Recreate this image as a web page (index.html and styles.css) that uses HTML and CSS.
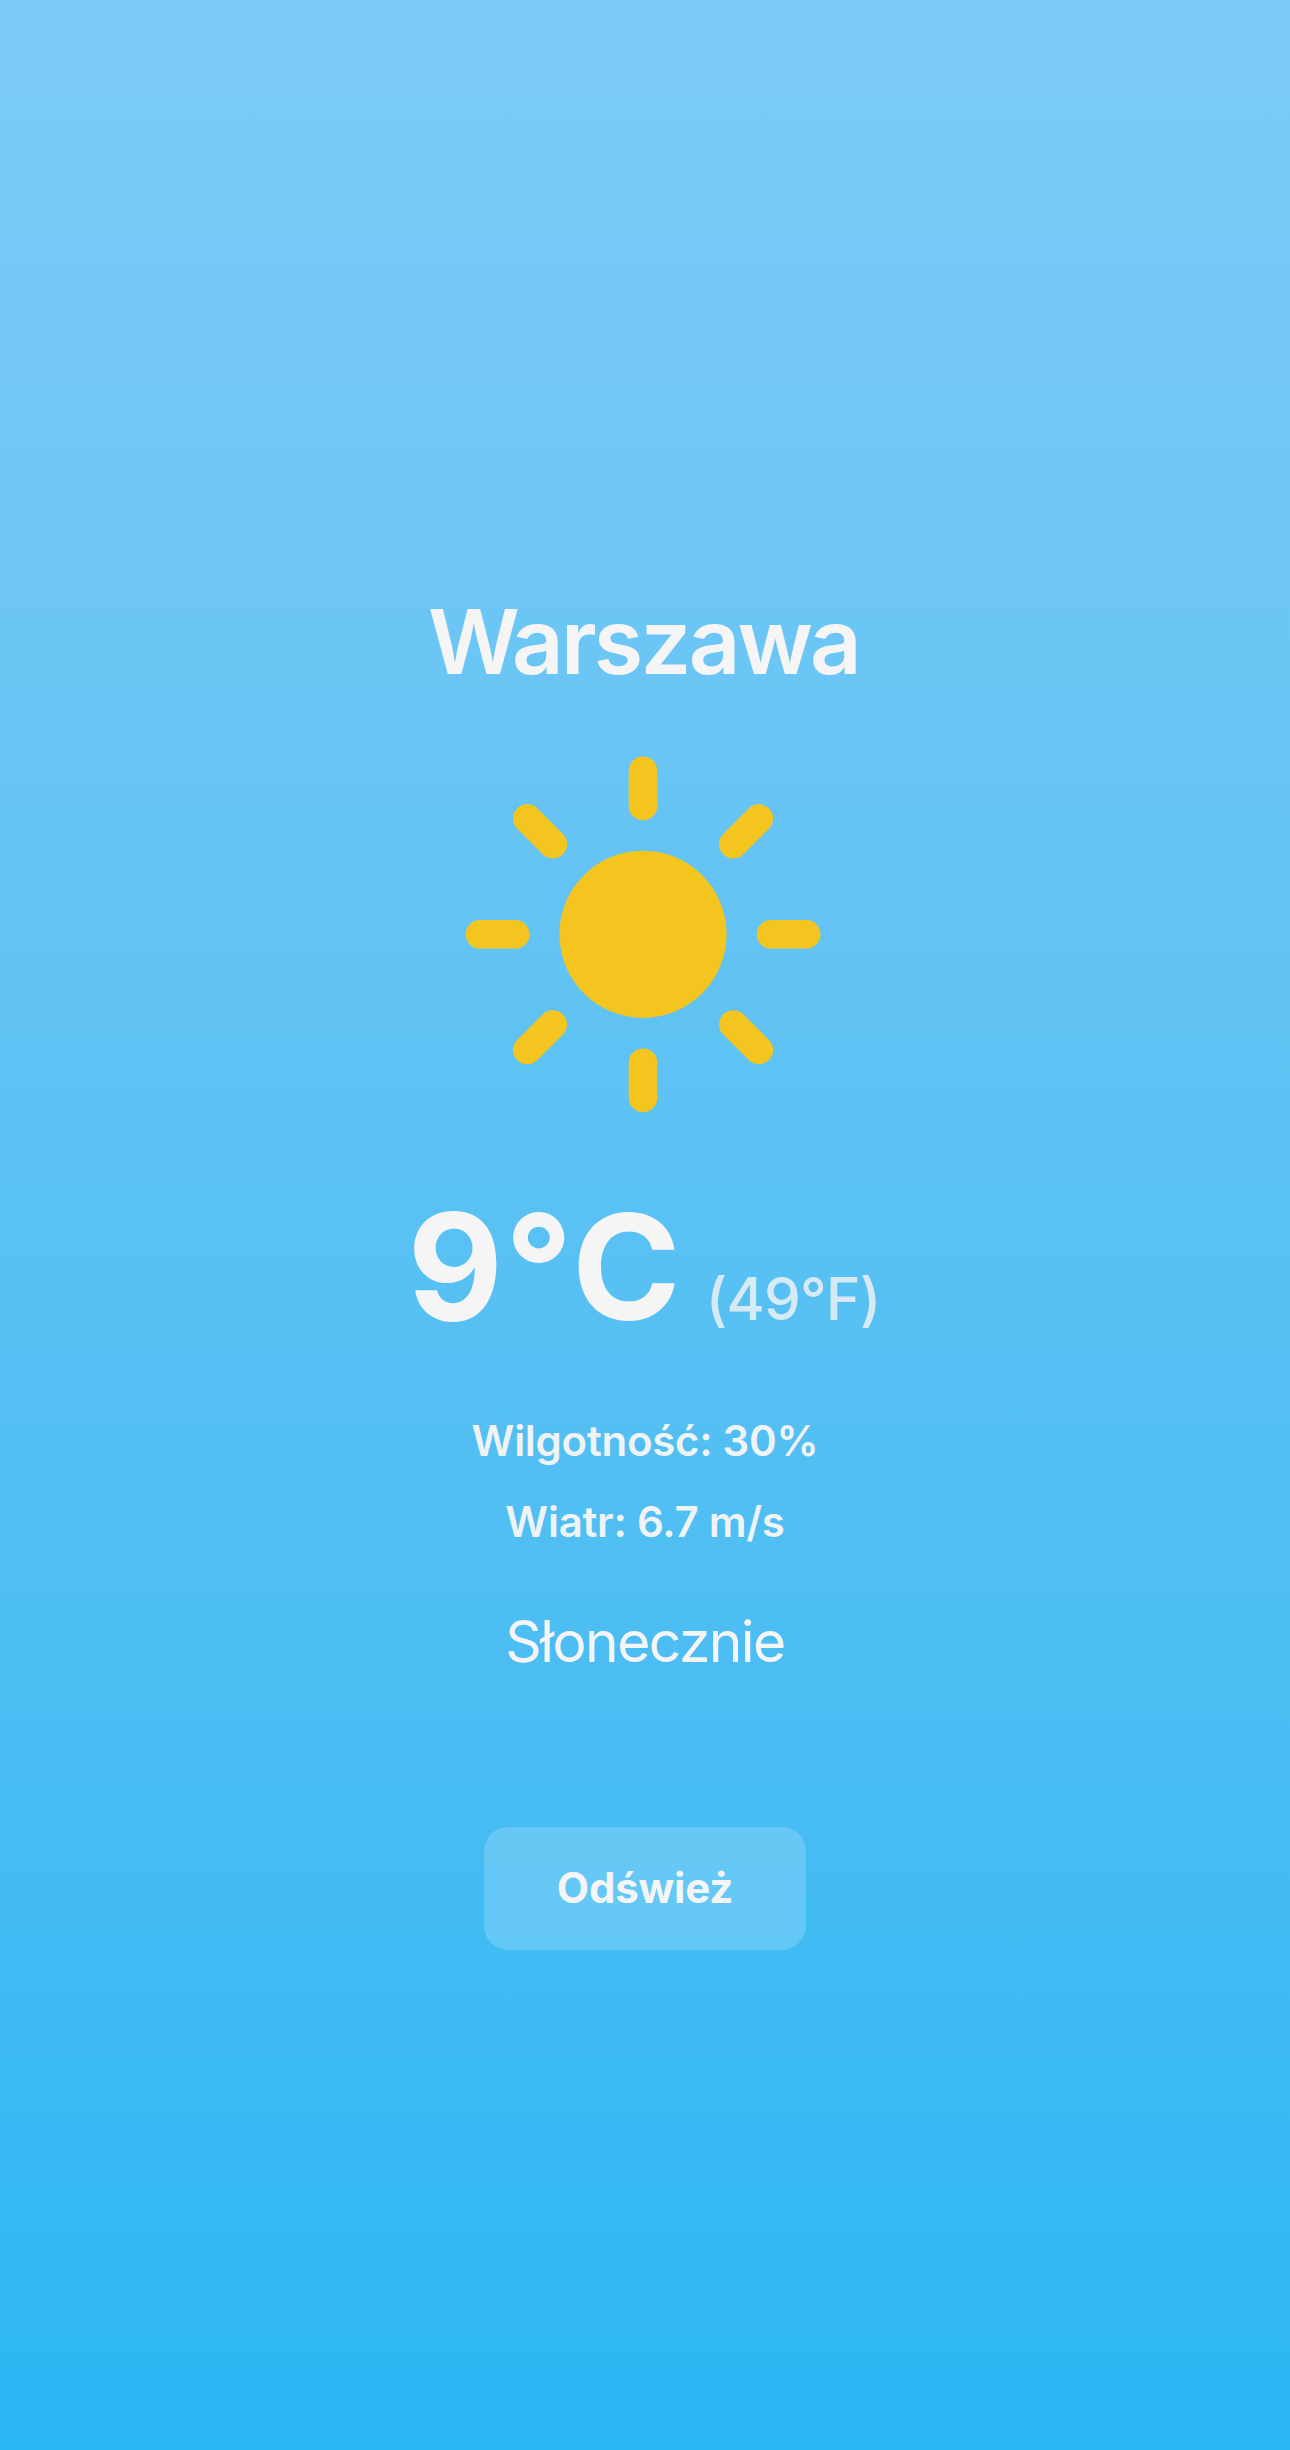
FILE: index.html
```html
<!DOCTYPE html>
<html lang="pl">
<head>
<meta charset="utf-8">
<title>Pogoda</title>
<link rel="stylesheet" href="styles.css">
</head>
<body>
<main class="weather">
  <h1 class="city">Warszawa</h1>
  <svg class="sun" viewBox="0 0 360 360" aria-hidden="true">
    <circle cx="180" cy="180.3" r="83.6"/>
    <path d="M180 16.7v35.2M180 308.7v35.2M17 180.3h35.2M308 180.3h35.2M64.3 64.6l25.5 25.5M270.3 270.5l25.5 25.5M64.3 296l25.5-25.5M270.3 90.1l25.5-25.5"/>
  </svg>
  <div class="temperature"><span class="celsius">9°C</span><span class="fahrenheit">(49°F)</span></div>
  <p class="humidity">Wilgotność: 30%</p>
  <p class="wind">Wiatr: 6.7 m/s</p>
  <p class="condition">Słonecznie</p>
  <button class="refresh" type="button">Odśwież</button>
</main>
</body>
</html>
```
FILE: styles.css
```css
* { box-sizing: border-box; margin: 0; }
body { font-family: Inter, "Liberation Sans", sans-serif; color: #f5f5f5; }
.weather {
  height: 2450px;
  padding-top: 586px;
  display: flex;
  flex-direction: column;
  align-items: center;
  background: linear-gradient(#7dcbf7, #6ac5f5 28%, #5ac1f3 49%, #46bcf3 75%, #2bb6f4);
}
.city { font-size: 90px; line-height: 112px; font-weight: 600; letter-spacing: -2.8px; margin-right: 3px; }
.sun { width: 360px; height: 360px; margin: 56px 5px 0 0; }
.sun circle { fill: #f5c51f; }
.sun path { stroke: #f5c51f; stroke-width: 28.6px; stroke-linecap: round; }
.temperature { display: flex; align-items: baseline; gap: 23px; margin: 63px 2px 0 0; line-height: 180px; }
.celsius { font-size: 147px; font-weight: 700; letter-spacing: 2px; }
.fahrenheit { font-size: 58.5px; line-height: 70px; font-weight: 500; letter-spacing: -.8px; opacity: .8; }
.humidity, .wind { font-size: 42px; line-height: 51px; font-weight: 600; letter-spacing: -.27px; opacity: .97; }
.humidity { margin-top: 58px; }
.wind { margin-top: 30px; }
.condition { margin-top: 60px; font-size: 57px; line-height: 69px; font-weight: 400; letter-spacing: -1.6px; }
.refresh {
  width: 322px; height: 123px; margin-top: 151px;
  border: 0; border-radius: 24px; padding-bottom: 3px;
  background: rgba(255,255,255,.18);
  color: inherit; font: 700 42px Inter, sans-serif; letter-spacing: -.2px;
}
```
